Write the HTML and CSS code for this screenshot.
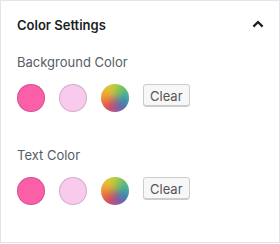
FILE: index.html
```html
<!DOCTYPE html>
<html lang="en">
<head>
  <meta charset="UTF-8"/>
  <title>Color Settings</title>
  <link rel="stylesheet" href="styles.css">
</head>
<body>
  <div class="panel">
    <div class="panel-header">
      <h2 class="panel-title">Color Settings</h2>
      <svg class="chevron" width="12" height="8" viewBox="0 0 12 8" aria-hidden="true">
        <path d="M1.4 6.6 L6 2 L10.6 6.6" fill="none" stroke="#191e23" stroke-width="2.2"/>
      </svg>
    </div>
    <div class="panel-body">
      <div class="color-group">
        <div class="color-label">Background Color</div>
        <div class="palette">
          <button class="swatch swatch-pink"></button>
          <button class="swatch swatch-light"></button>
          <button class="swatch swatch-custom"></button>
          <button class="clear-btn">Clear</button>
        </div>
      </div>
      <div class="color-group">
        <div class="color-label">Text Color</div>
        <div class="palette">
          <button class="swatch swatch-pink"></button>
          <button class="swatch swatch-light"></button>
          <button class="swatch swatch-custom"></button>
          <button class="clear-btn">Clear</button>
        </div>
      </div>
    </div>
  </div>
</body>
</html>
```
FILE: styles.css
```css
:root {
  --border: #e2e4e7;
  --title: #191e23;
  --label: #555d66;
  --font: 'Inter', 'Noto Sans', sans-serif;
}

*, *::before, *::after { box-sizing: border-box; }

body {
  margin: 0;
  background: #fff;
  font-family: var(--font);
}

.panel {
  width: 280px;
  height: 243px;
  border: 1px solid var(--border);
  background: #fff;
}

.panel-header {
  height: 47px;
  display: flex;
  align-items: center;
  justify-content: space-between;
  padding: 0 15px 0 16px;
}

.panel-title {
  margin: 0;
  font-size: 13px;
  font-weight: 600;
  color: var(--title);
}

.chevron { display: block; margin-top: -1px; }

.panel-body {
  padding: 4px 16px 0;
}

.color-group + .color-group { margin-top: 33px; }

.color-label {
  font-size: 13px;
  line-height: 20px;
  color: var(--label);
  margin-bottom: 12px;
}

.palette {
  display: flex;
  align-items: flex-start;
  gap: 14px;
}

.swatch {
  width: 28px;
  height: 28px;
  padding: 0;
  border: none;
  border-radius: 50%;
  box-shadow: inset 0 0 0 1px rgba(0,0,0,0.15);
}

.swatch-pink { background: #fa5fa8; }
.swatch-light { background: #f8cbec; }

/* soft rainbow for the custom colour picker */
.swatch-custom {
  position: relative;
  overflow: hidden;
  box-shadow: none;
}
.swatch-custom::before {
  content: '';
  position: absolute;
  inset: -6px;
  background: conic-gradient(from 10deg, #9fcc3c, #35b0a0 70deg, #3a7fb8 110deg, #8258a8 150deg, #d3456c 195deg, #ea6d3a 240deg, #f4b233 285deg, #dccd2e 325deg, #9fcc3c);
  filter: blur(4px);
}

.clear-btn {
  height: 23px;
  padding: 0 6px;
  font-family: var(--font);
  font-size: 13px;
  color: #555;
  background: #f7f7f7;
  border: 1px solid #ccc;
  border-radius: 3px;
  box-shadow: inset 0 -1px 0 #ccc;
}
```
